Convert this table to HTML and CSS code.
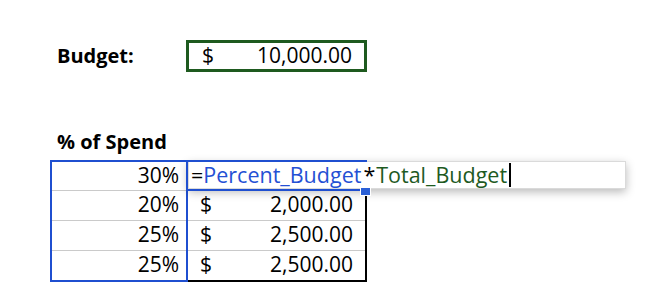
FILE: index.html
```html
<!DOCTYPE html>
<html>
<head>
<meta charset="utf-8">
<link rel="stylesheet" href="styles.css">
</head>
<body>
<div class="sheet">
  <div class="budget-row">
    <div class="label">Budget:</div>
    <div class="budget-box"><span>$</span><span>10,000.00</span></div>
  </div>
  <div class="spend-title">% of Spend</div>
  <div class="table">
    <div class="col-a">
      <div class="row first">30%</div>
      <div class="row">20%</div>
      <div class="row">25%</div>
      <div class="row">25%</div>
    </div>
    <div class="col-b">
      <div class="row first"></div>
      <div class="row money"><span>$</span><span>2,000.00</span></div>
      <div class="row money"><span>$</span><span>2,500.00</span></div>
      <div class="row money"><span>$</span><span>2,500.00</span></div>
    </div>
    <div class="editor"><span class="op">=</span><span class="ref-blue">Percent_Budget</span><span class="op star">*</span><span class="ref-green">Total_Budget</span><span class="caret"></span></div>
    <div class="active-cell"></div>
    <div class="fill-handle"></div>
  </div>
</div>
</body>
</html>
```

FILE: styles.css
```css
html, body {
  margin: 0;
  padding: 0;
  background: #ffffff;
}

.sheet {
  padding: 40px 0 0 50px;
  font-family: "Open Sans", "Liberation Sans", sans-serif;
  font-size: 21px;
  color: #000;
}

.budget-row {
  display: flex;
  height: 32px;
}

.label {
  width: 136px;
  padding-left: 7px;
  box-sizing: border-box;
  line-height: 32px;
  font-size: 20px;
  font-weight: bold;
}

.budget-box {
  width: 181px;
  height: 32px;
  box-sizing: border-box;
  border: 3px solid #1e5a1f;
  display: flex;
  justify-content: space-between;
  padding: 0 12px 0 13px;
  line-height: 25px;
}

.spend-title {
  margin-top: 58px;
  padding-left: 7px;
  line-height: 24px;
  padding-bottom: 6px;
  font-size: 20px;
  font-weight: bold;
}

.table {
  position: relative;
  display: flex;
  width: 317px;
}

.col-a {
  width: 138px;
  box-sizing: border-box;
  border: 2px solid #1f4fd0;
  text-align: right;
}

.col-a .row {
  padding-right: 7px;
}

.col-b {
  width: 179px;
  box-sizing: border-box;
  padding-top: 2px;
  border-right: 2px solid #000;
  border-bottom: 2px solid #000;
}

.row {
  height: 29px;
  line-height: 27px;
  border-top: 1px solid #cacaca;
}

.row.first {
  height: 28px;
  border-top: none;
}

.col-b .row.first + .row {
  border-top-color: transparent;
}

.money {
  display: flex;
  justify-content: space-between;
  padding: 0 12px 0 12px;
}

.editor {
  position: absolute;
  left: 138px;
  top: 1px;
  width: 438px;
  height: 28px;
  box-sizing: border-box;
  background: #fff;
  border: 1px solid #dadada;
  box-shadow: 0 3px 10px rgba(0, 0, 0, 0.28);
  padding-left: 2px;
  font-size: 21.5px;
  line-height: 26px;
  display: flex;
  align-items: center;
  white-space: nowrap;
}

.op {
  color: #000;
}

.star {
  margin: 0 1px 0 2px;
}

.ref-blue {
  color: #2450d4;
}

.ref-green {
  color: #1e5a1f;
}

.caret {
  display: inline-block;
  width: 2px;
  height: 24px;
  margin-left: 2px;
  background: #000;
}

.active-cell {
  position: absolute;
  left: 136px;
  top: 0;
  width: 181px;
  height: 31px;
  box-sizing: border-box;
  border-top: 2px solid #1f4fd0;
  border-left: 2px solid #1f4fd0;
  border-bottom: 2px solid #1f4fd0;
  border-right: none;
}

.fill-handle {
  position: absolute;
  left: 310px;
  top: 28px;
  width: 9px;
  height: 7px;
  background: #2a5fd6;
  border: 1px solid #fff;
  border-top: none;
}
```
